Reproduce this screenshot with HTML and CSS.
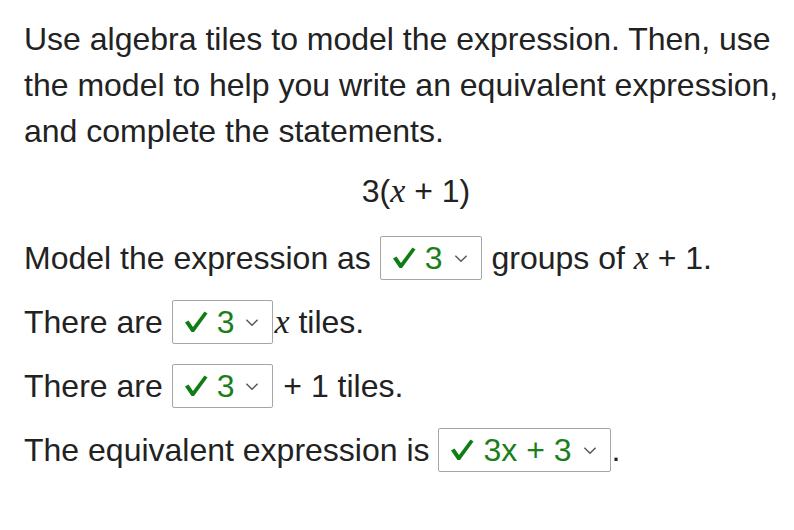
FILE: index.html
```html
<!DOCTYPE html>
<html>
<head>
<meta charset="utf-8">
<link rel="stylesheet" href="styles.css">
</head>
<body>
<div class="page">
  <p class="intro">Use algebra tiles to model the expression. Then, use the model to help you write an equivalent expression, and complete the statements.</p>
  <div class="expr">3(<span class="var">x</span> + 1)</div>
  <div class="rows">
    <div class="row">Model the expression as <span class="sel"><svg class="chk" viewBox="0 0 24 22" width="24" height="22"><path d="M1 11.5 L4.5 9.5 L9 16 L20.5 0.5 L23.5 2.5 L10 21 L7.5 21 Z" fill="#0f7d14"/></svg><span class="val">3</span><svg class="chev" viewBox="0 0 12 8" width="14" height="9"><path d="M1 1.5 L6 6.5 L11 1.5" fill="none" stroke="#555" stroke-width="1.2"/></svg></span> groups of <span class="var">x</span>&nbsp;+ 1.</div>
    <div class="row">There are <span class="sel"><svg class="chk" viewBox="0 0 24 22" width="24" height="22"><path d="M1 11.5 L4.5 9.5 L9 16 L20.5 0.5 L23.5 2.5 L10 21 L7.5 21 Z" fill="#0f7d14"/></svg><span class="val">3</span><svg class="chev" viewBox="0 0 12 8" width="14" height="9"><path d="M1 1.5 L6 6.5 L11 1.5" fill="none" stroke="#555" stroke-width="1.2"/></svg></span> <span class="var">x</span>&nbsp;tiles.</div>
    <div class="row">There are <span class="sel"><svg class="chk" viewBox="0 0 24 22" width="24" height="22"><path d="M1 11.5 L4.5 9.5 L9 16 L20.5 0.5 L23.5 2.5 L10 21 L7.5 21 Z" fill="#0f7d14"/></svg><span class="val">3</span><svg class="chev" viewBox="0 0 12 8" width="14" height="9"><path d="M1 1.5 L6 6.5 L11 1.5" fill="none" stroke="#555" stroke-width="1.2"/></svg></span> + 1 tiles.</div>
    <div class="row">The equivalent expression is <span class="sel"><svg class="chk" viewBox="0 0 24 22" width="24" height="22"><path d="M1 11.5 L4.5 9.5 L9 16 L20.5 0.5 L23.5 2.5 L10 21 L7.5 21 Z" fill="#0f7d14"/></svg><span class="val">3x + 3</span><svg class="chev" viewBox="0 0 12 8" width="14" height="9"><path d="M1 1.5 L6 6.5 L11 1.5" fill="none" stroke="#555" stroke-width="1.2"/></svg></span>.</div>
  </div>
</div>
</body>
</html>
```
FILE: styles.css
```css
html, body {
  margin: 0;
  padding: 0;
  background: #fff;
  overflow: hidden;
}
.page {
  width: 784px;
  padding: 16px 0 0 24px;
  font-family: "Liberation Sans", Arial, sans-serif;
  font-size: 32px;
  color: #222;
}
.intro {
  margin: 0;
  line-height: 46px;
}
.expr {
  margin-top: 14px;
  line-height: 46px;
  text-align: center;
}
.var {
  font-family: "Liberation Serif", "Times New Roman", serif;
  font-style: italic;
  font-size: 34px;
}
.rows {
  margin-top: 22px;
  display: flex;
  flex-direction: column;
  gap: 20px;
}
.row {
  height: 44px;
  display: flex;
  align-items: center;
  white-space: pre;
}
.sel {
  display: inline-flex;
  align-items: center;
  height: 42px;
  border: 1px solid #a6a6a6;
  border-radius: 2px;
  padding: 0 13px 0 11px;
  margin: 0 1px 0 0;
  color: #1a7f1a;
}
.chk {
  display: block;
  margin-right: 9px;
}
.val {
  margin-right: 11px;
}
.chev {
  display: block;
}
```
